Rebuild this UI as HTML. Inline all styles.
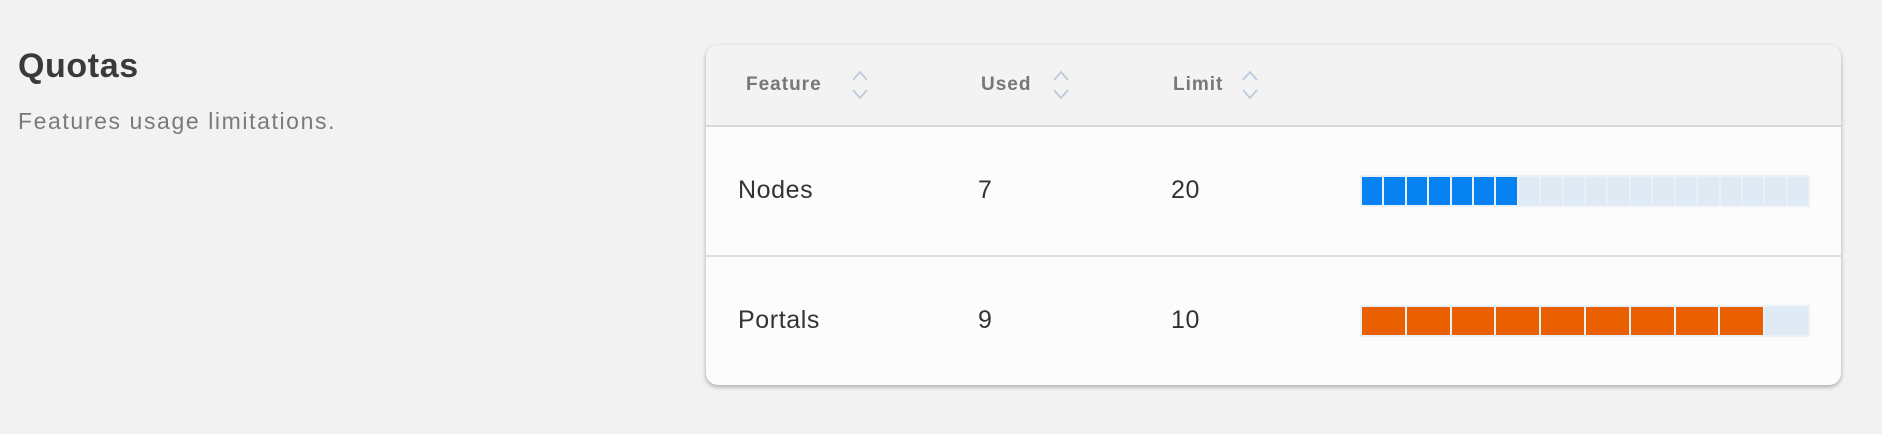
<!DOCTYPE html>
<html><head><style>
body{margin:0;width:1882px;height:434px;background:#f2f2f2;font-family:"Liberation Sans",sans-serif;position:relative;overflow:hidden}
.t{position:absolute;left:18px;top:47px;font-size:34px;font-weight:bold;color:#3a3a3a;letter-spacing:0.6px}
.s{position:absolute;left:18px;top:108px;font-size:23px;color:#7a7a7a;letter-spacing:1.6px}
.card{position:absolute;left:706px;top:45px;width:1135px;height:340px;border-radius:12px;background:#fcfcfc;box-shadow:0 2px 5px rgba(0,0,0,.3);overflow:hidden}
.hd{position:absolute;left:0;top:0;width:100%;height:80px;background:#f3f3f3;border-bottom:2px solid #d8d8d8}
.r1{position:absolute;left:0;top:210px;width:100%;border-top:2px solid #dedede}
.h{position:absolute;top:29px;font-size:19px;font-weight:bold;color:#777;letter-spacing:1px}
.ic{position:absolute;top:24px}
.c{position:absolute;font-size:25px;color:#333;letter-spacing:0.6px}
.bar{position:absolute;left:654px;width:450px;height:32px;background:#e8f0f9;display:flex;gap:2px;padding:2px;box-sizing:border-box}
.bar i{flex:1;background:#e0eaf5}
.b i.on{background:#0582f0}.o i.on{background:#ea5f00}
</style></head><body>
<div class="t">Quotas</div>
<div class="s">Features usage limitations.</div>
<div class="card">
<div class="hd"></div><div class="r1"></div>
<div class="h" style="left:40px">Feature</div>
<div class="h" style="left:275px">Used</div>
<div class="h" style="left:467px">Limit</div>
<svg class="ic" style="left:145px" width="18" height="32" viewBox="0 0 18 32"><path d="M2 11l7-8 7 8M2 21l7 8 7-8" fill="none" stroke="#bccbdb" stroke-width="1.8"/></svg>
<svg class="ic" style="left:346px" width="18" height="32" viewBox="0 0 18 32"><path d="M2 11l7-8 7 8M2 21l7 8 7-8" fill="none" stroke="#bccbdb" stroke-width="1.8"/></svg>
<svg class="ic" style="left:535px" width="18" height="32" viewBox="0 0 18 32"><path d="M2 11l7-8 7 8M2 21l7 8 7-8" fill="none" stroke="#bccbdb" stroke-width="1.8"/></svg>
<div class="c" style="left:32px;top:131px">Nodes</div>
<div class="c" style="left:272px;top:131px">7</div>
<div class="c" style="left:465px;top:131px">20</div>
<div class="bar b" style="top:130px"><i class="on"></i><i class="on"></i><i class="on"></i><i class="on"></i><i class="on"></i><i class="on"></i><i class="on"></i><i></i><i></i><i></i><i></i><i></i><i></i><i></i><i></i><i></i><i></i><i></i><i></i><i></i></div>
<div class="c" style="left:32px;top:261px">Portals</div>
<div class="c" style="left:272px;top:261px">9</div>
<div class="c" style="left:465px;top:261px">10</div>
<div class="bar o" style="top:260px"><i class="on"></i><i class="on"></i><i class="on"></i><i class="on"></i><i class="on"></i><i class="on"></i><i class="on"></i><i class="on"></i><i class="on"></i><i></i></div>
</div>
</body></html>
